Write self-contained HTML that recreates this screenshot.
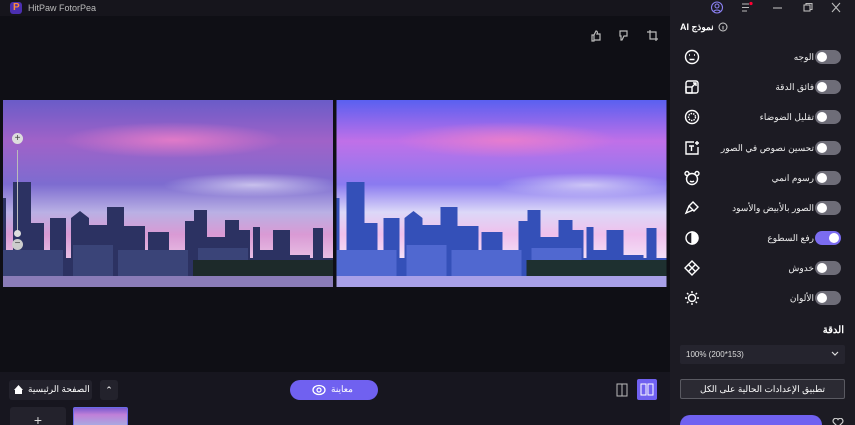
<!DOCTYPE html>
<html><head><meta charset="utf-8"><style>
*{margin:0;padding:0;box-sizing:border-box}
html,body{width:855px;height:425px;overflow:hidden}
body{background:#0f0f15;font-family:"Liberation Sans","Noto Sans CJK SC",sans-serif;position:relative;color:#ddd}
.a{position:absolute}
.panel{left:670px;top:0;width:185px;height:425px;background:#1c1b23}
.row{position:absolute;left:670px;width:185px;height:20px}
.tg{position:absolute;left:145px;top:3px;width:26px;height:14px;border-radius:7px;background:#6e6d78}
.tg::after{content:"";position:absolute;left:2px;top:2px;width:10px;height:10px;border-radius:50%;background:#fff}
.tg.on{background:#7b6cf0}.tg.on::after{left:14px}
.lb{position:absolute;right:41px;top:5px;font-size:9px;color:#eee;white-space:nowrap;direction:rtl}
.ic{position:absolute;left:14px;top:2px}
</style></head><body>
<div class="a" style="left:0;top:0;width:670px;height:16px;background:#16151c"></div>
<div class="a" style="left:10px;top:2px;width:12px;height:12px;border-radius:3px;background:#4b2fb0"></div>
<div class="a" style="left:13px;top:2px;font-size:10px;font-weight:bold;color:#ff8a3a">P</div>
<div class="a" style="left:28px;top:3px;font-size:9px;color:#bbb">HitPaw FotorPea</div>

<svg class="a" style="left:590px;top:29px" width="70" height="14" fill="none" stroke="#bbb" stroke-width="1.2">
<path d="M2 6h2v6H2zM4 6l2-4c1 0 2 1 1 3h3v6H4"/>
<path d="M30 2h7v5h-3l-2 4h-1V7h-1z"/>
<path d="M60 1v9h8M57 3h9v9"/>
</svg>

<svg class="a" style="left:3px;top:100px" width="330" height="187" viewBox="0 0 330 187">
<defs>
<linearGradient id="s1" x1="0" y1="0" x2="0" y2="1">
<stop offset="0" stop-color="#6a5cc8"/><stop offset=".22" stop-color="#a062c8"/><stop offset=".45" stop-color="#7d6cd0"/><stop offset=".6" stop-color="#b9b0e4"/><stop offset=".72" stop-color="#d99ad4"/><stop offset=".88" stop-color="#ecc8e8"/><stop offset="1" stop-color="#c0a8d8"/></linearGradient>
<linearGradient id="s2" x1="0" y1="0" x2="0" y2="1">
<stop offset="0" stop-color="#5a60f0"/><stop offset=".22" stop-color="#c070e8"/><stop offset=".45" stop-color="#8a7af0"/><stop offset=".6" stop-color="#dcd8f8"/><stop offset=".72" stop-color="#f0c0ec"/><stop offset=".88" stop-color="#f4e8fa"/><stop offset="1" stop-color="#d8d0f8"/></linearGradient>
<radialGradient id="c1"><stop offset="0" stop-color="#f080c8" stop-opacity=".8"/><stop offset="1" stop-color="#f080c8" stop-opacity="0"/></radialGradient>
<radialGradient id="c2"><stop offset="0" stop-color="#e8e4f8" stop-opacity=".7"/><stop offset="1" stop-color="#e8e4f8" stop-opacity="0"/></radialGradient>
<g id="sky">
<rect x="0" y="98" width="3" height="80"/><rect x="10" y="82" width="18" height="96"/><rect x="28" y="123" width="13" height="55"/>
<rect x="47" y="118" width="16" height="60"/><path d="M68 118l9-7 9 7v60H68z"/><rect x="86" y="125" width="18" height="53"/>
<rect x="104" y="107" width="17" height="71"/><rect x="121" y="126" width="21" height="52"/><rect x="145" y="132" width="21" height="46"/>
<rect x="182" y="121" width="9" height="57"/><rect x="191" y="110" width="13" height="68"/><rect x="201" y="137" width="21" height="41"/>
<rect x="222" y="120" width="14" height="58"/><rect x="236" y="130" width="11" height="48"/><rect x="250" y="127" width="7" height="51"/>
<rect x="257" y="150" width="13" height="28"/><rect x="270" y="130" width="17" height="48"/><rect x="287" y="155" width="20" height="23"/>
<rect x="310" y="128" width="10" height="50"/><rect x="0" y="158" width="330" height="20"/>
</g>
<g id="low"><rect x="0" y="150" width="60" height="28"/><rect x="70" y="145" width="40" height="33"/><rect x="115" y="150" width="70" height="28"/><rect x="195" y="148" width="50" height="14"/></g>
</defs>
<rect width="330" height="187" fill="url(#s1)"/>
<ellipse cx="170" cy="40" rx="110" ry="18" fill="url(#c1)"/>
<ellipse cx="250" cy="85" rx="90" ry="12" fill="url(#c2)"/>
<use href="#sky" fill="#2c3262"/>
<use href="#low" fill="#3a4478"/>
<rect y="160" x="190" width="140" height="16" fill="#1d2a2a"/>
<rect y="176" width="330" height="11" fill="#8a7cb8"/>
</svg>
<svg class="a" style="left:336px;top:100px" width="331" height="187" viewBox="0 0 330 187">
<rect width="330" height="187" fill="url(#s2)"/>
<ellipse cx="170" cy="40" rx="110" ry="18" fill="url(#c1)"/>
<ellipse cx="250" cy="85" rx="90" ry="12" fill="url(#c2)"/>
<use href="#sky" fill="#3450b8"/>
<use href="#low" fill="#5068d0"/>
<rect y="160" x="190" width="140" height="16" fill="#1e3030"/>
<rect y="176" width="330" height="11" fill="#a8a0e8"/>
</svg>
<div class="a" style="left:12px;top:133px;width:11px;height:11px;border-radius:50%;background:#ddd;color:#444;font-size:10px;line-height:11px;text-align:center">+</div>
<div class="a" style="left:17px;top:150px;width:1px;height:82px;background:#bbb"></div>
<div class="a" style="left:14px;top:230px;width:7px;height:7px;border-radius:50%;background:#ddd"></div>
<div class="a" style="left:12px;top:239px;width:11px;height:11px;border-radius:50%;background:#ccc;color:#444;font-size:10px;line-height:10px;text-align:center">−</div>

<div class="a" style="left:0;top:372px;width:670px;height:53px;background:#17161f"></div>
<div class="a" style="left:9px;top:380px;width:83px;height:20px;background:#23222c;border-radius:3px"></div>
<svg class="a" style="left:13px;top:384px" width="11" height="11"><path d="M1 6L5.5 1 10 6H9v4H2V6z" fill="#fff"/></svg>
<div class="a" style="left:28px;top:384px;font-size:9px;color:#fff;direction:rtl">الصفحة الرئيسية</div>
<div class="a" style="left:100px;top:380px;width:18px;height:20px;background:#23222c;border-radius:3px;color:#fff;font-size:9px;text-align:center;line-height:20px">⌃</div>
<div class="a" style="left:290px;top:380px;width:88px;height:20px;background:#7061f0;border-radius:10px"></div>
<svg class="a" style="left:312px;top:383px" width="14" height="14" fill="none" stroke="#fff" stroke-width="1.3"><ellipse cx="7" cy="7" rx="6" ry="4.5"/><circle cx="7" cy="7" r="2"/></svg>
<div class="a" style="left:331px;top:384px;font-size:9px;color:#fff;direction:rtl">معاينة</div>
<svg class="a" style="left:616px;top:383px" width="12" height="14" fill="none" stroke="#bbb"><rect x="1" y="1" width="10" height="12"/><path d="M6 1v12"/></svg>
<div class="a" style="left:637px;top:379px;width:20px;height:21px;background:#7061f0;border-radius:2px"></div>
<svg class="a" style="left:640px;top:383px" width="14" height="13" fill="none" stroke="#fff"><rect x="1" y="1" width="5" height="11"/><rect x="8" y="1" width="5" height="11"/></svg>
<div class="a" style="left:10px;top:407px;width:56px;height:18px;background:#23222c;border-radius:3px 3px 0 0;color:#ddd;text-align:center;font-size:14px;line-height:26px;overflow:hidden">+</div>
<div class="a" style="left:73px;top:407px;width:55px;height:18px;border:1px solid #6a6ae8;border-bottom:0;border-radius:2px 2px 0 0;background:linear-gradient(#7a5ad0,#c080d8 40%,#a8a8e0)"></div>

<div class="a panel"></div>
<svg class="a" style="left:710px;top:1px" width="140" height="13" fill="none" stroke="#bbb" stroke-width="1.1">
<circle cx="7" cy="6.5" r="5.5" stroke="#8a80f0"/><circle cx="7" cy="5" r="2" stroke="#8a80f0"/><path d="M3.5 10.5c2-2 5-2 7 0" stroke="#8a80f0"/>
<path d="M32 3h7M32 6.5h7M32 10h5"/><circle cx="41" cy="2.5" r="1.6" fill="#f03" stroke="none"/>
<path d="M63 7h9"/><rect x="94" y="4" width="6" height="6"/><path d="M96 4V2.5h6v6h-2"/>
<path d="M122 2l8 9M130 2l-8 9"/></svg>
<div class="a" style="left:680px;top:22px;font-size:9px;font-weight:bold;color:#fff;direction:rtl;white-space:nowrap">نموذج AI</div>
<svg class="a" style="left:718px;top:22px" width="10" height="10" fill="none" stroke="#ccc"><circle cx="5" cy="5" r="4"/><path d="M5 4v3.5"/></svg>

<div class="row" style="top:47px"><svg class="ic" width="16" height="16" fill="none" stroke="#fff" stroke-width="1.4"><circle cx="8" cy="8" r="6.5"/><path d="M5 6h1M10 6h1M5.5 10.5h5"/></svg><span class="lb">الوجه</span><span class="tg"></span></div>
<div class="row" style="top:77px"><svg class="ic" width="16" height="16" fill="none" stroke="#fff" stroke-width="1.4"><rect x="2" y="2" width="12" height="12" rx="2"/><rect x="2" y="8" width="6" height="6"/><path d="M8 8l4-4M9 4h3v3"/></svg><span class="lb">فائق الدقة</span><span class="tg"></span></div>
<div class="row" style="top:107px"><svg class="ic" width="16" height="16" fill="none" stroke="#fff" stroke-width="1.4"><circle cx="8" cy="8" r="6.5"/><circle cx="8" cy="8" r="3.5" stroke-dasharray="1.5 1"/></svg><span class="lb">تقليل الضوضاء</span><span class="tg"></span></div>
<div class="row" style="top:138px"><svg class="ic" width="16" height="16" fill="none" stroke="#fff" stroke-width="1.4"><path d="M10 2H2v12h12V7"/><path d="M5 6h5M7.5 6v5M13 1v4M11 3h4"/></svg><span class="lb">تحسين نصوص في الصور</span><span class="tg"></span></div>
<div class="row" style="top:168px"><svg class="ic" width="16" height="16" fill="none" stroke="#fff" stroke-width="1.4"><circle cx="8" cy="9" r="5.5"/><circle cx="3" cy="3.5" r="2"/><circle cx="13" cy="3.5" r="2"/><path d="M6 11c1 1 3 1 4 0"/></svg><span class="lb">رسوم انمي</span><span class="tg"></span></div>
<div class="row" style="top:198px"><svg class="ic" width="16" height="16" fill="none" stroke="#fff" stroke-width="1.4"><path d="M9 2l5 5-4 4-5-5zM5 6l-3 7 7-3"/></svg><span class="lb">الصور بالأبيض والأسود</span><span class="tg"></span></div>
<div class="row" style="top:228px"><svg class="ic" width="16" height="16" fill="none" stroke="#fff" stroke-width="1.4"><circle cx="8" cy="8" r="6"/><path d="M8 2a6 6 0 010 12z" fill="#fff"/></svg><span class="lb">رفع السطوع</span><span class="tg on"></span></div>
<div class="row" style="top:258px"><svg class="ic" width="16" height="16" fill="none" stroke="#fff" stroke-width="1.4"><path d="M8 1l7 7-7 7-7-7z"/><path d="M4 4l8 8M12 4l-8 8"/></svg><span class="lb">خدوش</span><span class="tg"></span></div>
<div class="row" style="top:288px"><svg class="ic" width="16" height="16" fill="none" stroke="#fff" stroke-width="1.4"><circle cx="8" cy="8" r="3.5"/><path d="M8 1v2M8 13v2M1 8h2M13 8h2M3 3l1.4 1.4M11.6 11.6L13 13M3 13l1.4-1.4M11.6 4.4L13 3"/></svg><span class="lb">الألوان</span><span class="tg"></span></div>

<div class="a" style="right:11px;top:325px;font-size:10px;font-weight:bold;color:#fff;direction:rtl">الدقة</div>
<div class="a" style="left:680px;top:345px;width:165px;height:19px;background:#25242e;border-radius:2px"></div>
<div class="a" style="left:686px;top:350px;font-size:8px;color:#ddd">100% (200*153)</div>
<svg class="a" style="left:831px;top:351px" width="8" height="6" fill="none" stroke="#ddd" stroke-width="1.2"><path d="M1 1l3 3 3-3"/></svg>
<div class="a" style="left:680px;top:379px;width:165px;height:20px;background:#2b2a33;border:1px solid #5a5a62;border-radius:2px;text-align:center;font-size:9px;color:#fff;line-height:18px;direction:rtl">تطبيق الإعدادات الحالية على الكل</div>
<div class="a" style="left:680px;top:415px;width:142px;height:10px;background:#7061f0;border-radius:10px 10px 0 0"></div>
<svg class="a" style="left:832px;top:418px" width="12" height="7" fill="none" stroke="#ccc" stroke-width="1.2"><path d="M6 9L1.5 4.5A2.5 2.5 0 016 1.5a2.5 2.5 0 014.5 3z"/></svg>
</body></html>
